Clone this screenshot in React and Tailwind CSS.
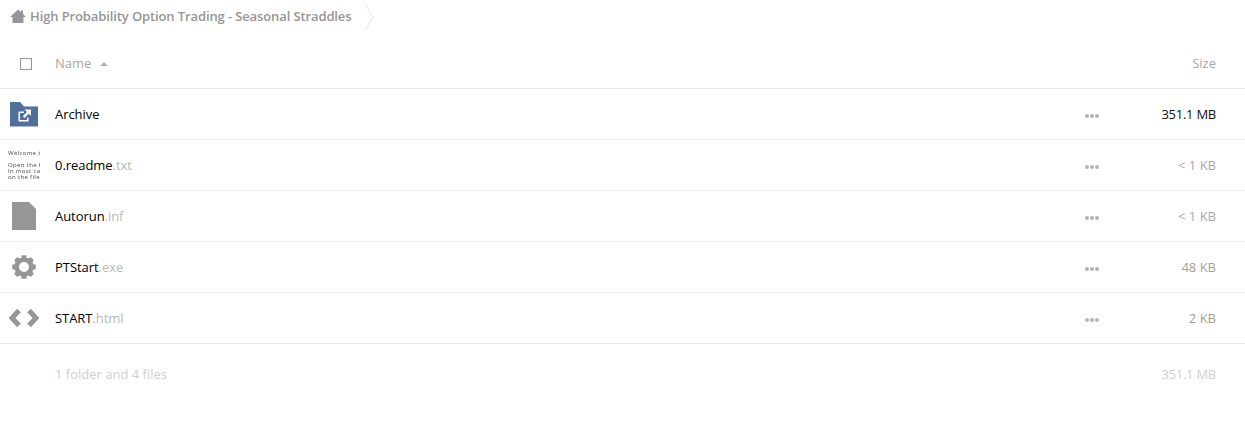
import React from 'react';

const files = [
  { name: '0.readme', ext: '.txt', size: '< 1 KB', sizeColor: 'text-[#a8a8a8]', icon: 'thumb' },
  { name: 'Autorun', ext: '.inf', size: '< 1 KB', sizeColor: 'text-[#a8a8a8]', icon: 'file' },
  { name: 'PTStart', ext: '.exe', size: '48 KB', sizeColor: 'text-[#a39f94]', icon: 'gear' },
  { name: 'START', ext: '.html', size: '2 KB', sizeColor: 'text-[#a39f94]', icon: 'code' },
];

function HomeIcon() {
  return (
    <svg width="16" height="15" viewBox="0 0 16 15" className="block">
      <path d="M8 0.5 L11 3 V1.5 H13 V5 L16 8 H13.5 V14 H2.5 V8 H0 Z" fill="#969696" />
    </svg>
  );
}

function FolderShared() {
  return (
    <svg width="28" height="25" viewBox="0 0 28 25" className="block">
      <path d="M0 0 H10 L14 4.5 H28 V24.5 H0 Z" fill="#50709b" />
      <path d="M8.5 9.5 H14 V11 H10 V18 H17 V15.5 H18.5 V19.5 H8.5 Z" fill="#fff" />
      <path d="M14.5 7.5 H21 V14 L18.7 11.7 L14.5 16 L12.8 14.2 L17 10 Z" fill="#fff" />
    </svg>
  );
}

function FileIcon() {
  return (
    <svg width="24" height="28" viewBox="0 0 24 28" className="block">
      <path d="M0 0 H17 L24 7 V28 H0 Z" fill="#969696" />
    </svg>
  );
}

// eight teeth, r 12 outside, r 9.6 at the root
function gearPath() {
  const pt = (r, deg) => {
    const a = (deg * Math.PI) / 180;
    return `${(12 + r * Math.cos(a)).toFixed(2)} ${(12 + r * Math.sin(a)).toFixed(2)}`;
  };
  let d = '';
  for (let i = 0; i < 8; i++) {
    const c = i * 45;
    d += `${i === 0 ? 'M' : 'L'}${pt(9.6, c - 16)} L${pt(12, c - 11)} L${pt(12, c + 11)} L${pt(9.6, c + 16)} `;
  }
  return `${d}Z M12 7 A5 5 0 1 0 12 17 A5 5 0 1 0 12 7 Z`;
}

function GearIcon() {
  return (
    <svg width="24" height="24" viewBox="0 0 24 24" className="block">
      <path fillRule="evenodd" fill="#969696" d={gearPath()} />
    </svg>
  );
}

function CodeIcon() {
  return (
    <svg width="32" height="20" viewBox="0 0 32 20" className="block">
      <path d="M11 2.5 L4 10 L11 17.5 M21 2.5 L28 10 L21 17.5" fill="none" stroke="#969696" strokeWidth="5" />
    </svg>
  );
}

function Thumb() {
  return (
    <div className="h-[32px] w-[32px] overflow-hidden whitespace-nowrap pt-[1px] font-['Open_Sans',sans-serif] text-[6px] leading-[6px] tracking-[0.35px] text-[#444] will-change-transform">
      <div className="mb-[6px]">Welcome t</div>
      <div>Open the f</div>
      <div>In most ca</div>
      <div>on the file</div>
    </div>
  );
}

function FileGlyph({ icon }) {
  if (icon === 'thumb') return <Thumb />;
  if (icon === 'file') return <FileIcon />;
  if (icon === 'gear') return <GearIcon />;
  return <CodeIcon />;
}

function Dots() {
  return (
    <div className="flex gap-[1px]">
      <span className="h-[4px] w-[4px] rounded-full bg-[#b4b4b4]" />
      <span className="h-[4px] w-[4px] rounded-full bg-[#b4b4b4]" />
      <span className="h-[4px] w-[4px] rounded-full bg-[#b4b4b4]" />
    </div>
  );
}

function Row({ icon, name, ext, size, sizeColor }) {
  return (
    <div className="flex h-[51px] items-center border-b border-[#ebebeb]">
      <div className="flex w-[55px] flex-none justify-center pr-[7px]">{icon}</div>
      <div className="flex-1 pt-[2px] tracking-[-0.05px] text-[#000]">
        {name}
        <span className="text-[#b8b8b8]">{ext}</span>
      </div>
      <div className="mt-[4px] mr-[56px]">
        <Dots />
      </div>
      <div className={`w-[90px] whitespace-nowrap pt-[2px] pr-[29px] text-right ${sizeColor}`}>{size}</div>
    </div>
  );
}

export default function App() {
  return (
    <div className="h-[423px] w-[1245px] overflow-hidden bg-white font-['Open_Sans',sans-serif] text-[13px]">
      {/* breadcrumb */}
      <div className="flex h-[33px] items-center pl-[10px]">
        <HomeIcon />
        <span className="ml-[4px] font-semibold tracking-[-0.115px] text-[#969696]">High Probability Option Trading - Seasonal Straddles</span>
        <svg width="12" height="28" viewBox="0 0 12 28" className="ml-[13px] block">
          <path d="M1 0.5 L9 14 L1 27.5" fill="none" stroke="#e6e6e6" strokeWidth="1" />
        </svg>
      </div>

      {/* table header */}
      <div className="flex h-[56px] items-center border-b border-[#ebebeb] pt-[7px] text-[#a8a8a8]">
        <div className="flex w-[55px] flex-none justify-center pr-[3px]">
          <span className="h-[12px] w-[12px] border border-[#969696] bg-white" />
        </div>
        <div className="flex flex-1 items-center">
          Name
          <span className="ml-[9px] h-0 w-0 border-x-[4px] border-b-[4px] border-x-transparent border-b-[#b4b4b4]" />
        </div>
        <div className="pr-[29px]">Size</div>
      </div>

      <Row icon={<FolderShared />} name="Archive" ext="" size="351.1 MB" sizeColor="tracking-[-0.25px] text-[#111]" />
      {files.map((f) => (
        <Row key={f.name} icon={<FileGlyph icon={f.icon} />} name={f.name} ext={f.ext} size={f.size} sizeColor={f.sizeColor} />
      ))}

      {/* summary */}
      <div className="flex h-[61px] items-center pl-[55px] pr-[29px] text-[#cfcfcf]">
        <div className="flex-1">1 folder and 4 files</div>
        <div className="tracking-[-0.25px]">351.1 MB</div>
      </div>
    </div>
  );
}
